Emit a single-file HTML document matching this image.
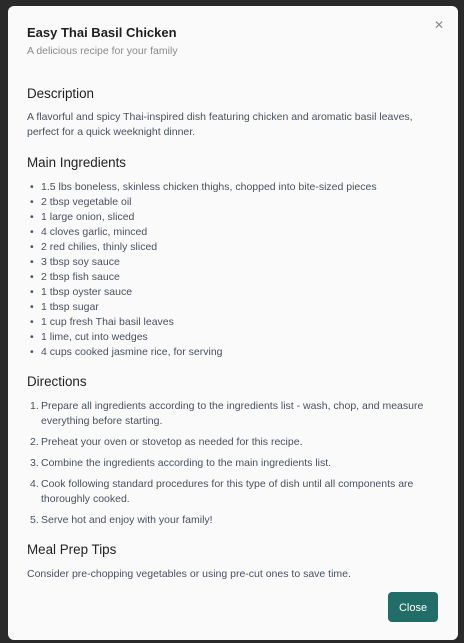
<!DOCTYPE html>
<html><head><style>
body{margin:0;width:464px;height:643px;background:#2a2a2a;font-family:"Liberation Sans",sans-serif;overflow:hidden;position:relative}
.m{position:absolute;left:8px;top:6px;width:450px;height:634px;background:#fafafa;border-radius:6px}
.a{position:absolute;left:19px;white-space:nowrap}
h1{position:absolute;left:19px;top:19px;margin:0;font-size:13px;font-weight:bold;color:#1f1f1f}
.sub{top:39px;font-size:10.5px;color:#8a8a8a}
.h{font-size:13.4px;color:#222;margin:0}
.t{font-size:10.5px;color:#4a5060;line-height:15px}
.x{position:absolute;right:14px;top:12px;font-size:12px;color:#888}
.btn{position:absolute;left:380px;top:586px;width:50px;height:30px;background:#216e68;border-radius:4px;color:#fff;font-size:11px;text-align:center;line-height:32px}
.b{position:absolute;left:3px}
</style></head><body>
<div class="m">
<h1>Easy Thai Basil Chicken</h1>
<div class="a sub">A delicious recipe for your family</div>
<div class="x">✕</div>
<div class="a h" style="top:80px">Description</div>
<div class="a t" style="top:104px">A flavorful and spicy Thai-inspired dish featuring chicken and aromatic basil leaves,<br>perfect for a quick weeknight dinner.</div>
<div class="a h" style="top:149px">Main Ingredients</div>
<div class="a t" style="top:174px;left:19px">
<div style="position:relative;padding-left:14px">
<span class="b" style="top:0">•</span><span class="b" style="top:15px">•</span><span class="b" style="top:30px">•</span><span class="b" style="top:45px">•</span><span class="b" style="top:60px">•</span><span class="b" style="top:75px">•</span><span class="b" style="top:90px">•</span><span class="b" style="top:105px">•</span><span class="b" style="top:120px">•</span><span class="b" style="top:135px">•</span><span class="b" style="top:150px">•</span><span class="b" style="top:165px">•</span>
1.5 lbs boneless, skinless chicken thighs, chopped into bite-sized pieces<br>2 tbsp vegetable oil<br>1 large onion, sliced<br>4 cloves garlic, minced<br>2 red chilies, thinly sliced<br>3 tbsp soy sauce<br>2 tbsp fish sauce<br>1 tbsp oyster sauce<br>1 tbsp sugar<br>1 cup fresh Thai basil leaves<br>1 lime, cut into wedges<br>4 cups cooked jasmine rice, for serving
</div></div>
<div class="a h" style="top:368px">Directions</div>
<div class="a t" style="top:393px;left:22px">1.</div><div class="a t" style="top:393px;left:33px">Prepare all ingredients according to the ingredients list - wash, chop, and measure<br>everything before starting.</div>
<div class="a t" style="top:429px;left:22px">2.</div><div class="a t" style="top:429px;left:33px">Preheat your oven or stovetop as needed for this recipe.</div>
<div class="a t" style="top:450px;left:22px">3.</div><div class="a t" style="top:450px;left:33px">Combine the ingredients according to the main ingredients list.</div>
<div class="a t" style="top:471px;left:22px">4.</div><div class="a t" style="top:471px;left:33px">Cook following standard procedures for this type of dish until all components are<br>thoroughly cooked.</div>
<div class="a t" style="top:507px;left:22px">5.</div><div class="a t" style="top:507px;left:33px">Serve hot and enjoy with your family!</div>
<div class="a h" style="top:536px">Meal Prep Tips</div>
<div class="a t" style="top:561px">Consider pre-chopping vegetables or using pre-cut ones to save time.</div>
<div class="btn">Close</div>
</div>
</body></html>
